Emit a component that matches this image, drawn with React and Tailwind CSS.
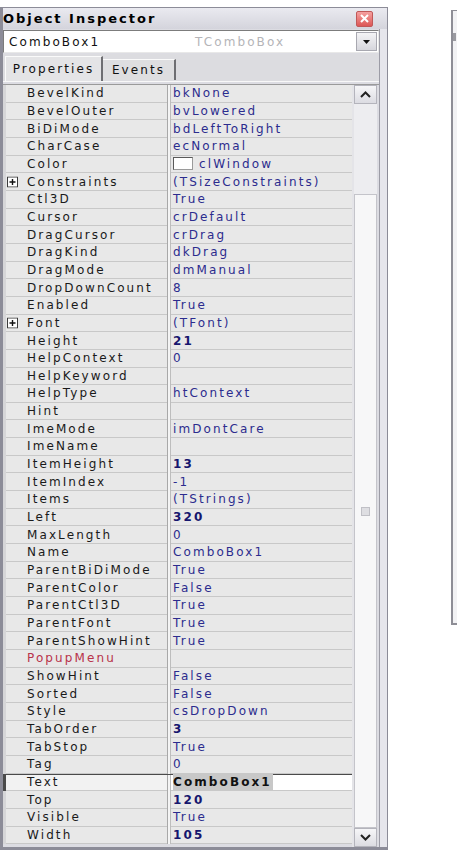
import React from "react";

const rows = [
  ["BevelKind", "bkNone"],
  ["BevelOuter", "bvLowered"],
  ["BiDiMode", "bdLeftToRight"],
  ["CharCase", "ecNormal"],
  ["Color", "clWindow", { swatch: true }],
  ["Constraints", "(TSizeConstraints)", { plus: true }],
  ["Ctl3D", "True"],
  ["Cursor", "crDefault"],
  ["DragCursor", "crDrag"],
  ["DragKind", "dkDrag"],
  ["DragMode", "dmManual"],
  ["DropDownCount", "8"],
  ["Enabled", "True"],
  ["Font", "(TFont)", { plus: true }],
  ["Height", "21", { bold: true }],
  ["HelpContext", "0"],
  ["HelpKeyword", ""],
  ["HelpType", "htContext"],
  ["Hint", ""],
  ["ImeMode", "imDontCare"],
  ["ImeName", ""],
  ["ItemHeight", "13", { bold: true }],
  ["ItemIndex", "-1"],
  ["Items", "(TStrings)"],
  ["Left", "320", { bold: true }],
  ["MaxLength", "0"],
  ["Name", "ComboBox1"],
  ["ParentBiDiMode", "True"],
  ["ParentColor", "False"],
  ["ParentCtl3D", "True"],
  ["ParentFont", "True"],
  ["ParentShowHint", "True"],
  ["PopupMenu", "", { link: true }],
  ["ShowHint", "False"],
  ["Sorted", "False"],
  ["Style", "csDropDown"],
  ["TabOrder", "3", { bold: true }],
  ["TabStop", "True"],
  ["Tag", "0"],
  ["Text", "ComboBox1", { selected: true }],
  ["Top", "120", { bold: true }],
  ["Visible", "True"],
  ["Width", "105", { bold: true }],
];

function PlusBox() {
  return (
    <svg width="11" height="11" viewBox="0 0 11 11" className="shrink-0">
      <rect x="0.5" y="0.5" width="10" height="10" fill="#fff" stroke="#3a3a3a" />
      <path d="M2.5 5.5h6M5.5 2.5v6" stroke="#111" strokeWidth="1.4" />
    </svg>
  );
}

function Row({ name, value, opt }) {
  const sel = opt.selected;
  return (
    <div className={`flex h-[17.67px] ${sel ? "border-t border-[#4a4a4a]" : ""}`}>
      <div className={`w-[3px] ${sel ? "bg-[#4a4a4a]" : "bg-[#d6d6d8]"}`} />
      <div
        className={`relative flex w-[161px] items-center border-b border-[#c8c8c8] pl-[21px] ${
          sel ? "bg-[#f2f2f2]" : "bg-[#e8e8e8]"
        }`}
      >
        {opt.plus && (
          <span className="absolute left-[1px] top-1/2 -translate-y-1/2">
            <PlusBox />
          </span>
        )}
        <span className={`whitespace-nowrap ${opt.link ? "text-[#b8334a]" : "text-[#1a1a1a]"}`}>{name}</span>
      </div>
      <div className="w-[4px] border-l border-r border-l-[#a8a8a8] border-r-[#bdbdbd] bg-[#f4f4f4]" />
      <div
        className={`flex flex-1 items-center border-b border-[#c8c8c8] pl-[2px] ${
          sel ? "bg-white" : "bg-[#e8e8e8]"
        }`}
      >
        {opt.swatch && (
          <span className="mr-[6px] h-[13px] w-[20px] border border-t-[#5a5a5a] border-l-[#5a5a5a] border-r-[#9a9a9a] border-b-[#9a9a9a] bg-white" />
        )}
        {sel ? (
          <span className="bg-[#c8c8c8] pr-[1px] font-bold text-[#111]">{value}</span>
        ) : (
          <span
            className={`whitespace-nowrap ${opt.bold ? "font-bold text-[#16166e]" : "text-[#2c2c8e]"}`}
          >
            {value}
          </span>
        )}
      </div>
    </div>
  );
}

function Chevron({ up }) {
  return (
    <svg width="11" height="7" viewBox="0 0 11 7">
      <path
        d={up ? "M1 6L5.5 1.5L10 6" : "M1 1L5.5 5.5L10 1"}
        fill="none"
        stroke="#222"
        strokeWidth="2"
      />
    </svg>
  );
}

function ScrollBar() {
  return (
    <div className="flex w-[23px] flex-col bg-[#eeeef0]">
      <div className="flex h-[19px] items-center justify-center border border-[#b4b4bc] bg-gradient-to-b from-[#f6f6f8] to-[#dcdce2]">
        <Chevron up />
      </div>
      <div className="h-[90px] bg-[#ededf0]" />
      <div className="flex flex-1 items-center justify-center border border-[#c4c4ca] bg-[#f7f7f8]">
        <div className="h-[9px] w-[9px] border border-[#c0c0c6] bg-[#dedee2]" />
      </div>
      <div className="flex h-[19px] items-center justify-center border border-[#b4b4bc] bg-gradient-to-b from-[#f6f6f8] to-[#dcdce2]">
        <Chevron />
      </div>
    </div>
  );
}

function Inspector() {
  return (
    <div className="flex h-[843px] w-[388px] flex-col border-t border-l-[3px] border-r border-b-[3px] border-[#8c8c98] bg-[#dcdce2]">
      {/* caption */}
      <div className="flex h-[21px] items-center justify-between bg-gradient-to-b from-[#eaeaf0] to-[#d4d4dc] pr-[14px]">
        <span className="text-[13px] font-bold tracking-[2px] text-black">Object Inspector</span>
        <span className="flex h-[16px] w-[17px] items-center justify-center rounded-[2px] border border-[#c05858] bg-gradient-to-b from-[#f4a0a0] to-[#dc5656]">
          <svg width="9" height="9" viewBox="0 0 9 9">
            <path d="M1 1L8 8M8 1L1 8" stroke="#fff" strokeWidth="2" />
          </svg>
        </span>
      </div>
      <div className="flex flex-1 flex-col border-r-[7px] border-[#e6e6ec]">
        <div className="flex flex-1 flex-col border-r border-[#9c9ca6]">
          {/* component selector */}
          <div className="mt-[1px] flex h-[23px] items-center border border-t-[#7c7c7c] border-l-[#7c7c7c] border-r-[#e8e8e8] border-b-[#e8e8e8] bg-white pr-[1px]">
            <span className="w-[191px] pl-[5px] text-[#111]">ComboBox1</span>
            <span className="flex-1 text-[#b4b4b8]">TComboBox</span>
            <span className="flex h-[19px] w-[21px] items-center justify-center border border-[#a8a8b0] bg-gradient-to-b from-[#f4f4f6] to-[#d6d6dc]">
              <svg width="7" height="4" viewBox="0 0 7 4">
                <path d="M0 0h7L3.5 4z" fill="#111" />
              </svg>
            </span>
          </div>
          {/* tabs */}
          <div className="mt-[1px] flex h-[28px] items-end border-b border-[#f8f8f8] bg-[#dcdce0] pl-[2px]">
            <div className="flex h-[25px] w-[98px] items-center justify-center border-t border-l border-[#fafafa] border-r-2 border-r-[#6e6e72] bg-[#e4e4e6] text-[#111]">
              Properties
            </div>
            <div className="mb-[1px] flex h-[21px] w-[73px] items-center justify-center border-t border-[#fafafa] border-r-2 border-r-[#6e6e72] bg-[#dedee0] text-[#111]">
              Events
            </div>
          </div>
          {/* property grid */}
          <div className="mt-[2px] flex flex-1 border-t border-[#9a9a9a]">
            <div className="flex w-[349px] flex-col">
              {rows.map(([n, v, o]) => (
                <Row key={n} name={n} value={v} opt={o || {}} />
              ))}
            </div>
            <div className="w-[2px] bg-[#e4e4e8]" />
            <ScrollBar />
          </div>
        </div>
      </div>
    </div>
  );
}

export default function App() {
  return (
    <div className="flex h-[851px] w-[457px] items-start overflow-hidden bg-white pt-[7px] font-['DejaVu_Sans',Verdana,sans-serif] text-[12px] tracking-[2.1px]">
      <Inspector />
      {/* neighbouring window edge */}
      <div className="ml-[63px] mt-[3px] h-[615px] flex-1 border-l-2 border-t border-b-2 border-[#8e8e96] bg-[#f2f2f4]">
        <div className="mt-[22px] h-[8px] w-[3px] bg-[#9a9aa0]" />
      </div>
    </div>
  );
}
